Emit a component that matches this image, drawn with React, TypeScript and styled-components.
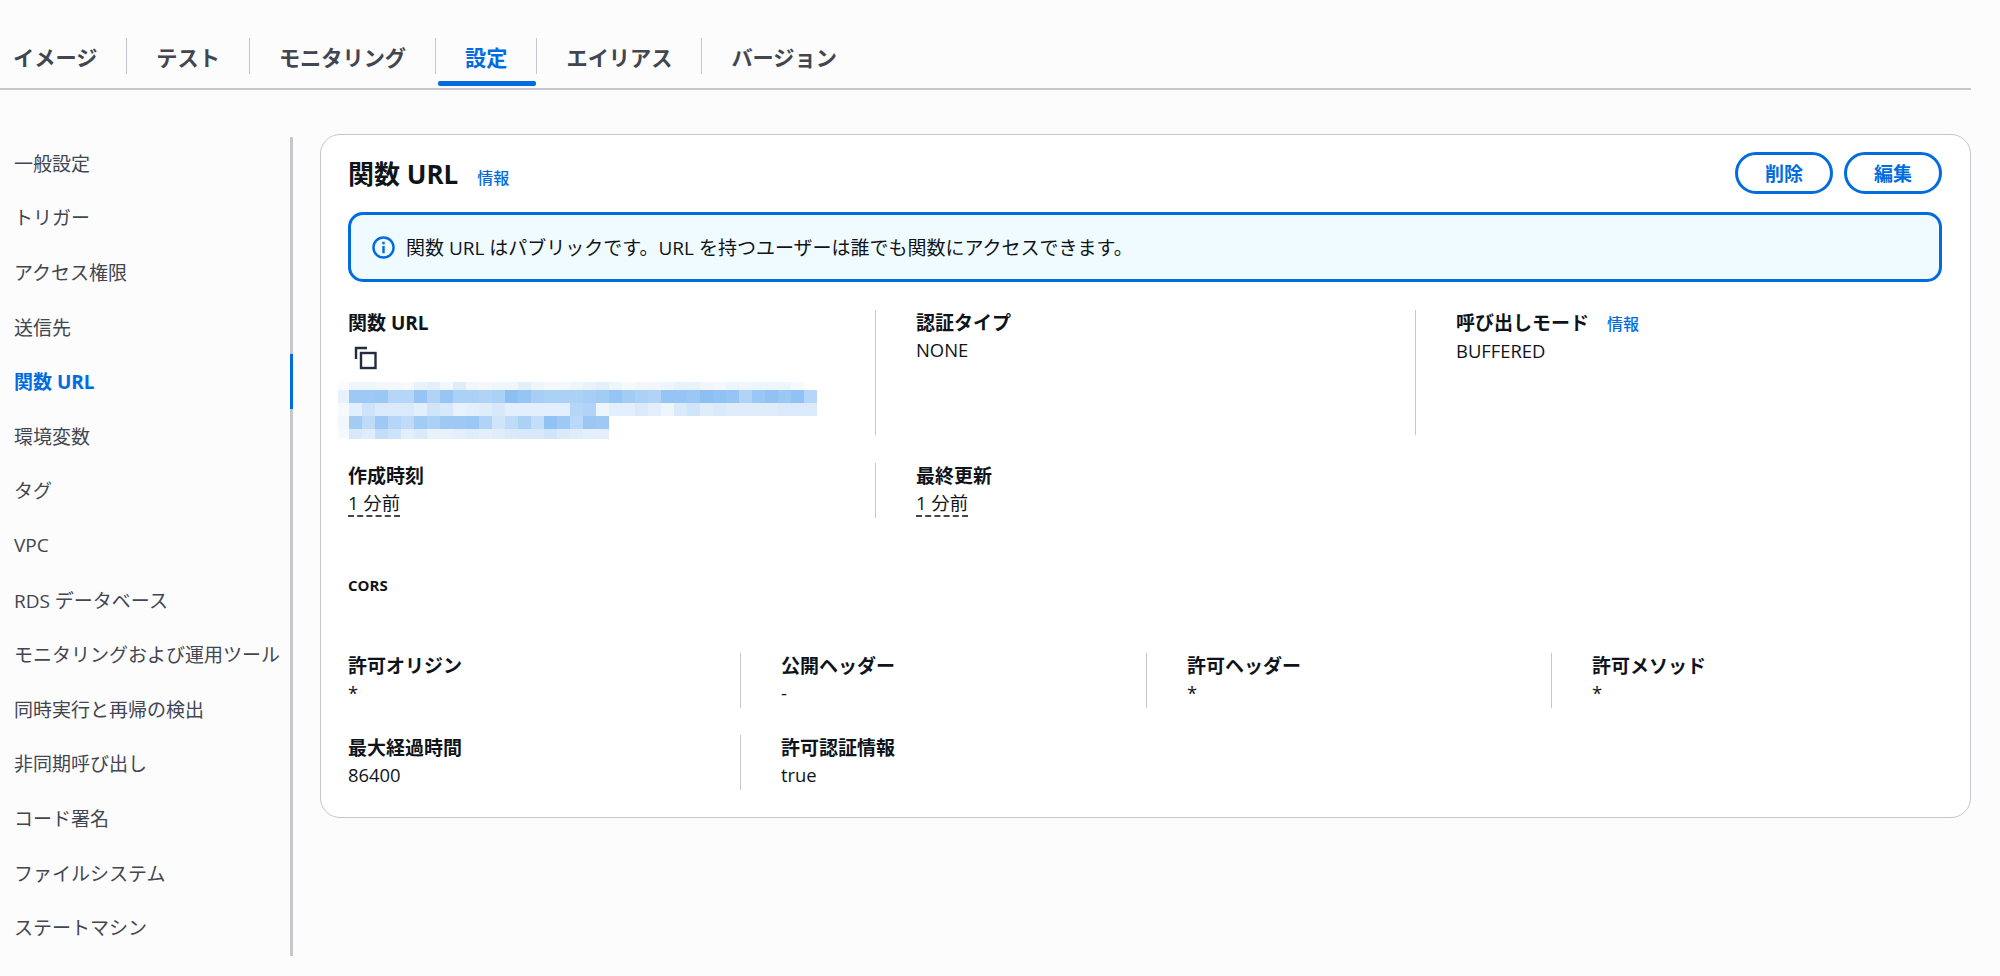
import React from 'react';
import styled, { createGlobalStyle } from 'styled-components';

const GlobalStyle = createGlobalStyle`
  html, body {
    margin: 0;
    padding: 0;
    background: #fcfcfd;
  }
  body {
    font-family: "Open Sans", "Noto Sans CJK JP", sans-serif;
    color: #0f141a;
    font-size: 18px;
  }
  * {
    box-sizing: border-box;
  }
`;

const BLUE = '#006ce0';

const Page = styled.div`
  width: 2000px;
  height: 976px;
  padding-right: 29px;
  overflow: hidden;
`;

const TabBar = styled.div`
  display: flex;
  align-items: stretch;
  height: 90px;
  padding-top: 38px;
  padding-bottom: 14px;
  border-bottom: 2px solid #c6c6cd;
`;

const Tab = styled.div<{ $active?: boolean }>`
  position: relative;
  display: flex;
  align-items: center;
  padding: 0 29px;
  font-size: 21.2px;
  font-weight: 700;
  color: ${(p) => (p.$active ? BLUE : '#424650')};
  border-right: 1.3px solid #c6c6cd;

  &:first-child {
    padding-left: 13px;
  }
  &:last-child {
    border-right: none;
  }

  ${(p) =>
    p.$active &&
    `
    &::after {
      content: '';
      position: absolute;
      left: 2px;
      right: 0;
      bottom: -12px;
      height: 5px;
      border-radius: 2px;
      background: ${BLUE};
    }
  `}
`;

const Body = styled.div`
  display: flex;
  align-items: flex-start;
  padding-top: 44px;
`;

const Sidebar = styled.nav`
  flex: none;
  width: 293px;
  margin-top: 3px;
  border-right: 3px solid #c6c6cd;
`;

const NavItem = styled.div<{ $active?: boolean }>`
  position: relative;
  height: 54.6px;
  display: flex;
  align-items: center;
  padding: 0 0 3px 14px;
  font-size: 19px;
  white-space: nowrap;
  color: ${(p) => (p.$active ? BLUE : '#424650')};
  font-weight: ${(p) => (p.$active ? 700 : 400)};

  ${(p) =>
    p.$active &&
    `
    &::after {
      content: '';
      position: absolute;
      top: -1px;
      bottom: 1px;
      right: -3px;
      width: 3px;
      background: ${BLUE};
    }
  `}
`;

const Card = styled.section`
  flex: none;
  width: 1651px;
  margin-left: 27px;
  padding: 17px 28px 27px 27px;
  background: #fff;
  border: 1.5px solid #c6c6cd;
  border-radius: 20px;
`;

const CardHeader = styled.div`
  display: flex;
  justify-content: space-between;
  align-items: center;
  height: 42px;
`;

const TitleGroup = styled.div`
  display: flex;
  align-items: baseline;
  gap: 19px;
`;

const Title = styled.h2`
  margin: 0;
  font-size: 26px;
  font-weight: 700;
  color: #0f141a;
`;

const InfoLink = styled.a`
  color: ${BLUE};
  font-size: 16px;
  font-weight: 500;
`;

const Actions = styled.div`
  display: flex;
  gap: 11px;
`;

const Button = styled.button`
  width: 98px;
  height: 42px;
  padding: 0;
  background: #fff;
  color: ${BLUE};
  border: 3px solid ${BLUE};
  border-radius: 21px;
  font-family: inherit;
  font-size: 19px;
  font-weight: 600;
`;

const Alert = styled.div`
  display: flex;
  align-items: center;
  gap: 11px;
  height: 70px;
  margin-top: 18px;
  padding-left: 21px;
  background: #f0fbff;
  border: 3px solid ${BLUE};
  border-radius: 15px;
  font-size: 19px;
  color: #0f141a;
`;

const Fields = styled.div<{ $columns: string }>`
  display: grid;
  grid-template-columns: ${(p) => p.$columns};
  row-gap: 27px;
`;

const Field = styled.div`
  padding-left: 40px;
  border-left: 1.3px solid #c6c6cd;
  min-height: 55px;

  &:first-child,
  &.first {
    padding-left: 0;
    border-left: none;
  }
`;

const Label = styled.div`
  display: flex;
  align-items: baseline;
  gap: 18px;
  line-height: 26px;
  font-size: 19px;
  font-weight: 700;
  color: #0f141a;
`;

const Value = styled.div`
  line-height: 28px;
  font-size: 18.4px;
  color: #0f141a;
`;

const Dashed = styled.span`
  text-decoration: underline dashed #424650 2px;
  text-underline-offset: 5px;
`;

const SectionHead = styled.div`
  margin-top: 55px;
  margin-bottom: 56px;
  line-height: 24px;
  font-size: 15px;
  font-weight: 700;
`;

const CopyButton = styled.div`
  height: 26px;
  margin: 9px 0 11px 6px;
  display: flex;
  align-items: center;
`;

const MainFields = styled(Fields)`
  margin-top: 28px;
  row-gap: 28px;
`;

// the redacted url runs a few px past the divider, as in the console
const UrlRow = styled(Field)`
  height: 125px;
`;

const Mosaic = styled.svg`
  display: block;
  margin-left: -10px;
`;

const navItems = [
  '一般設定',
  'トリガー',
  'アクセス権限',
  '送信先',
  '関数 URL',
  '環境変数',
  'タグ',
  'VPC',
  'RDS データベース',
  'モニタリングおよび運用ツール',
  '同時実行と再帰の検出',
  '非同期呼び出し',
  'コード署名',
  'ファイルシステム',
  'ステートマシン',
];

const tabs = ['イメージ', 'テスト', 'モニタリング', '設定', 'エイリアス', 'バージョン'];

// redacted url: opacity of each mosaic cell, row by row
const mosaicRows = [
  { y: 0, h: 8, cells: [2, 8, 8, 6, 5, 4, 10, 12, 5, 14, 6, 5, 7, 7, 12, 8, 5, 5, 8, 10, 12, 8, 4, 6, 6, 8, 10, 10, 6, 5, 8, 7, 8, 8, 8, 4] },
  { y: 8, h: 13, cells: [10, 42, 42, 44, 32, 32, 46, 34, 45, 36, 36, 34, 36, 50, 46, 38, 36, 36, 36, 38, 40, 46, 40, 36, 34, 46, 46, 44, 50, 48, 46, 34, 44, 48, 44, 48, 32] },
  { y: 21, h: 13, cells: [4, 12, 22, 16, 16, 16, 12, 20, 18, 10, 12, 14, 18, 12, 12, 12, 12, 12, 32, 34, 8, 12, 12, 16, 12, 8, 16, 20, 14, 16, 14, 14, 14, 14, 16, 16, 16] },
  { y: 34, h: 13, cells: [6, 40, 28, 42, 32, 28, 40, 36, 42, 42, 44, 34, 20, 28, 36, 26, 48, 42, 30, 44, 42] },
  { y: 47, h: 10, cells: [4, 18, 14, 26, 22, 12, 16, 10, 10, 12, 14, 12, 14, 16, 18, 18, 20, 16, 14, 12, 12] },
];

const UrlMosaic = () => (
  <Mosaic width="480" height="57" viewBox="0 0 480 57">
    {mosaicRows.map((row) =>
      row.cells.map((o, i) => (
        <rect
          key={`${row.y}-${i}`}
          x={i === 0 ? 0 : 11 + (i - 1) * 13}
          y={row.y}
          width={i === 0 ? 11 : 13}
          height={row.h}
          fill="#1a7fe6"
          fillOpacity={o / 100}
        />
      )),
    )}
  </Mosaic>
);

const InfoIcon = () => (
  <svg width="23" height="23" viewBox="0 0 16 16" fill="none" stroke={BLUE} strokeWidth="1.7">
    <circle cx="8" cy="8" r="7" />
    <path d="M8 7v5" />
    <path d="M8 4v1.8" />
  </svg>
);

const CopyIcon = () => (
  <svg width="24" height="24" viewBox="0 0 24 24" fill="none" stroke="#232b3e" strokeWidth="2.4">
    <path d="M2 13V2h11" />
    <rect x="7" y="7" width="14.5" height="15" />
  </svg>
);

const App = () => (
  <Page>
    <GlobalStyle />
    <TabBar>
      {tabs.map((t) => (
        <Tab key={t} $active={t === '設定'}>
          {t}
        </Tab>
      ))}
    </TabBar>
    <Body>
      <Sidebar>
        {navItems.map((n) => (
          <NavItem key={n} $active={n === '関数 URL'}>
            {n}
          </NavItem>
        ))}
      </Sidebar>
      <Card>
        <CardHeader>
          <TitleGroup>
            <Title>関数 URL</Title>
            <InfoLink>情報</InfoLink>
          </TitleGroup>
          <Actions>
            <Button>削除</Button>
            <Button>編集</Button>
          </Actions>
        </CardHeader>
        <Alert>
          <InfoIcon />
          関数 URL はパブリックです。URL を持つユーザーは誰でも関数にアクセスできます。
        </Alert>
        <MainFields $columns="527px 540px 1fr">
          <UrlRow>
            <Label>関数 URL</Label>
            <CopyButton>
              <CopyIcon />
            </CopyButton>
            <UrlMosaic />
          </UrlRow>
          <UrlRow>
            <Label>認証タイプ</Label>
            <Value>NONE</Value>
          </UrlRow>
          <UrlRow>
            <Label>
              呼び出しモード
              <InfoLink>情報</InfoLink>
            </Label>
            <Value>BUFFERED</Value>
          </UrlRow>
          <Field className="first">
            <Label>作成時刻</Label>
            <Value>
              <Dashed>1 分前</Dashed>
            </Value>
          </Field>
          <Field>
            <Label>最終更新</Label>
            <Value>
              <Dashed>1 分前</Dashed>
            </Value>
          </Field>
        </MainFields>
        <SectionHead>CORS</SectionHead>
        <Fields $columns="392px 406px 405px 1fr">
          <Field>
            <Label>許可オリジン</Label>
            <Value>*</Value>
          </Field>
          <Field>
            <Label>公開ヘッダー</Label>
            <Value>-</Value>
          </Field>
          <Field>
            <Label>許可ヘッダー</Label>
            <Value>*</Value>
          </Field>
          <Field>
            <Label>許可メソッド</Label>
            <Value>*</Value>
          </Field>
          <Field className="first">
            <Label>最大経過時間</Label>
            <Value>86400</Value>
          </Field>
          <Field>
            <Label>許可認証情報</Label>
            <Value>true</Value>
          </Field>
        </Fields>
      </Card>
    </Body>
  </Page>
);

export default App;
